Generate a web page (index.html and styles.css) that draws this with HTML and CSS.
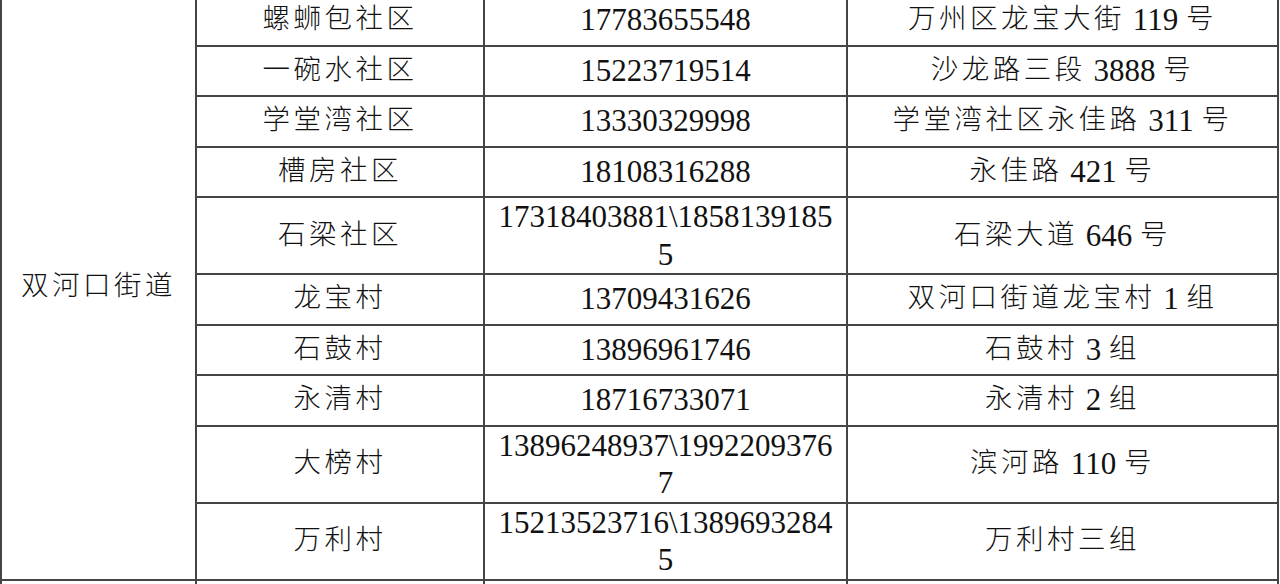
FILE: index.html
```html
<!DOCTYPE html>
<html lang="zh-CN">
<head>
<meta charset="utf-8">
<title>双河口街道</title>
<link rel="stylesheet" href="styles.css">
</head>
<body>
<div class="page">
<table class="grid">
  <colgroup>
    <col class="c1"><col class="c2"><col class="c3"><col class="c4">
  </colgroup>
  <tbody>
    <tr>
      <td class="street" rowspan="10"><span class="zh">双河口街道</span></td>
      <td><span class="zh">螺蛳包社区</span></td><td>17783655548</td><td><span class="zh">万州区龙宝大街</span> 119 <span class="zh">号</span></td>
    </tr>
    <tr><td><span class="zh">一碗水社区</span></td><td>15223719514</td><td><span class="zh">沙龙路三段</span> 3888 <span class="zh">号</span></td></tr>
    <tr><td><span class="zh">学堂湾社区</span></td><td>13330329998</td><td><span class="zh">学堂湾社区永佳路</span> 311 <span class="zh">号</span></td></tr>
    <tr><td><span class="zh">槽房社区</span></td><td>18108316288</td><td><span class="zh">永佳路</span> 421 <span class="zh">号</span></td></tr>
    <tr class="tall"><td><span class="zh">石梁社区</span></td><td>17318403881\1858139185<br>5</td><td><span class="zh">石梁大道</span> 646 <span class="zh">号</span></td></tr>
    <tr><td><span class="zh">龙宝村</span></td><td>13709431626</td><td><span class="zh">双河口街道龙宝村</span> 1 <span class="zh">组</span></td></tr>
    <tr><td><span class="zh">石鼓村</span></td><td>13896961746</td><td><span class="zh">石鼓村</span> 3 <span class="zh">组</span></td></tr>
    <tr><td><span class="zh">永清村</span></td><td>18716733071</td><td><span class="zh">永清村</span> 2 <span class="zh">组</span></td></tr>
    <tr class="tall"><td><span class="zh">大榜村</span></td><td>13896248937\1992209376<br>7</td><td><span class="zh">滨河路</span> 110 <span class="zh">号</span></td></tr>
    <tr class="tall"><td><span class="zh">万利村</span></td><td>15213523716\1389693284<br>5</td><td><span class="zh">万利村三组</span></td></tr>
    <tr><td>&nbsp;</td><td>&nbsp;</td><td>&nbsp;</td><td>&nbsp;</td></tr>
  </tbody>
</table>
</div>
</body>
</html>
```

FILE: styles.css
```css
html, body {
  margin: 0;
  padding: 0;
  background: #ffffff;
}

.page {
  width: 1280px;
  height: 584px;
  overflow: hidden;
}

.grid {
  margin-top: -6px;
  width: 1277px;
  border-collapse: collapse;
  table-layout: fixed;
  font-family: "Liberation Serif", "Noto Sans CJK SC", serif;
  font-size: 31px;
  color: #111111;
}

.c1 { width: 195px; }
.c2 { width: 288px; }
.c3 { width: 363px; }
.c4 { width: 431px; }

.grid td {
  border: 2px solid #454545;
  padding: 0 4px;
  height: 48.5px;
  line-height: 38px;
  text-align: center;
  vertical-align: middle;
  white-space: nowrap;
}

.grid tr.tall td {
  height: 73.5px;
  line-height: 37.5px;
}

.grid td.street {
  height: auto;
}

.zh {
  font-family: "Noto Sans CJK SC", sans-serif;
  font-size: 27.5px;
  font-weight: 300;
  line-height: 30px;
  letter-spacing: 3.5px;
  vertical-align: 2px;
}
```
